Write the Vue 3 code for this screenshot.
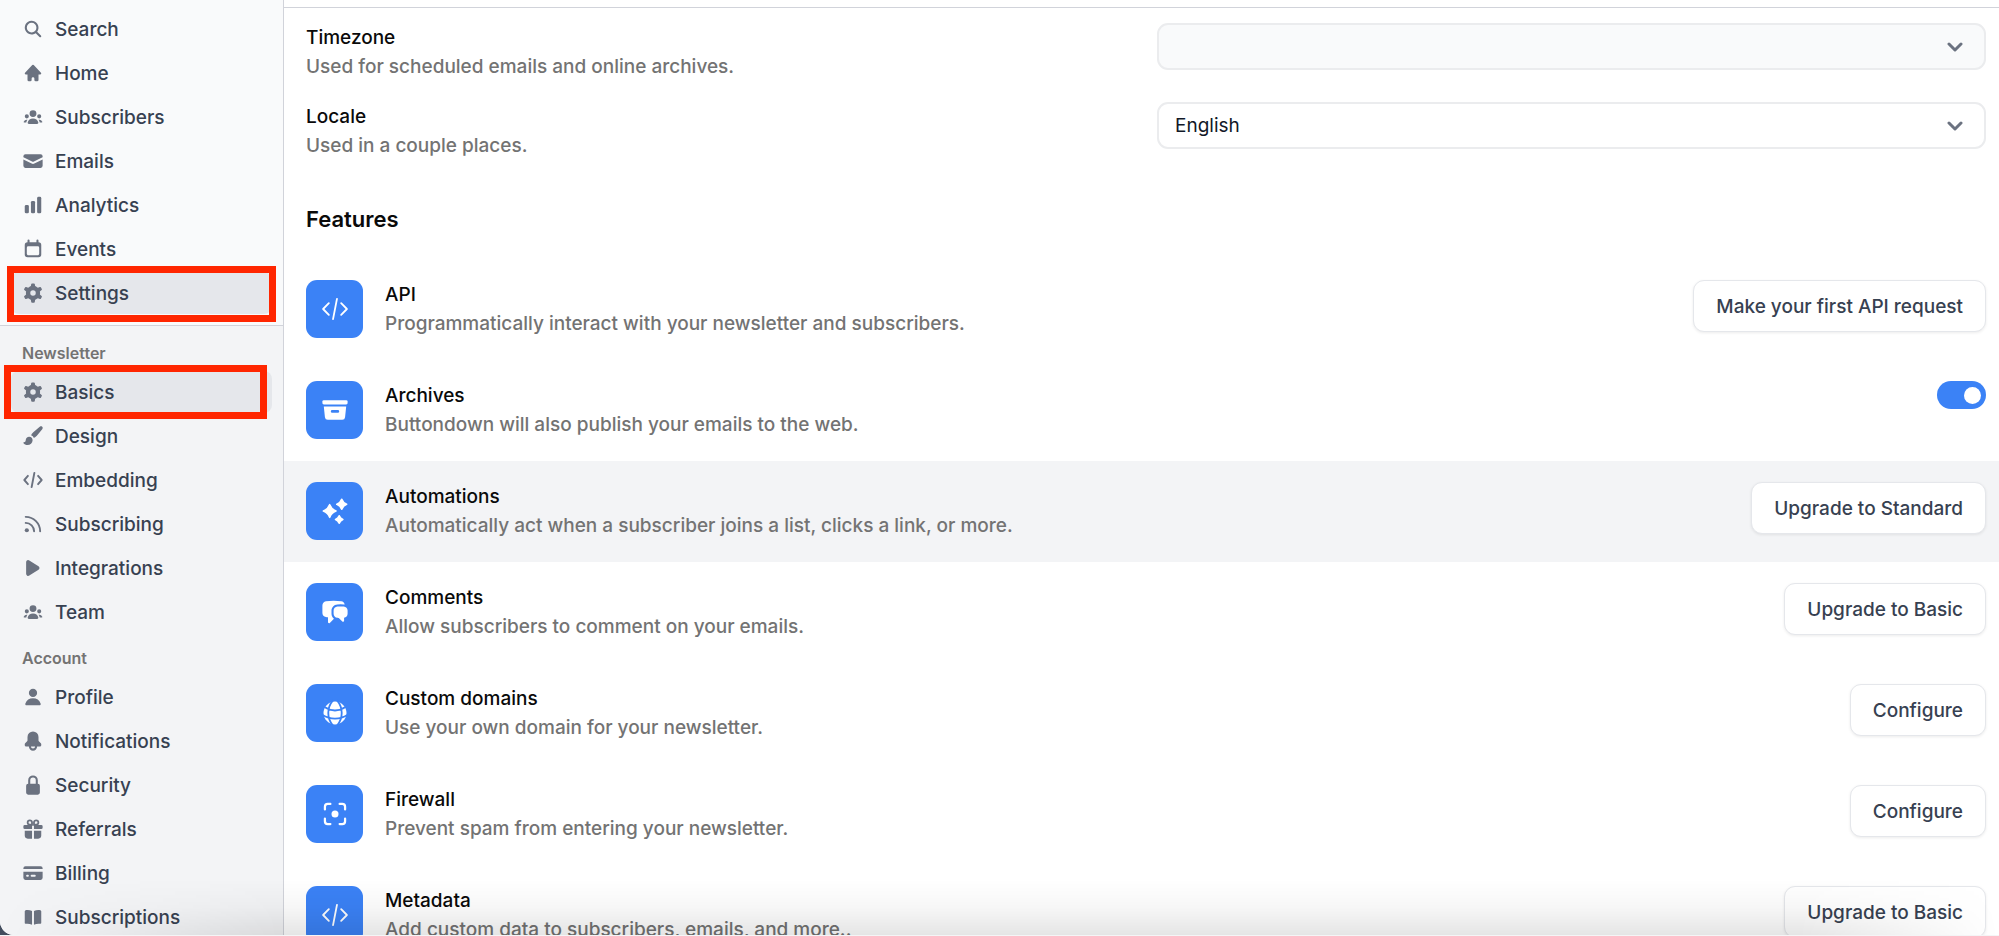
<script setup>
import { ref } from 'vue'

const gear =
  '<circle cx="8" cy="8" r="3.6" fill="none" stroke="currentColor" stroke-width="3.2"/><path id="t" d="M6.200 4.500 6.700 1.500Q6.800 1 7.300 1h1.400Q9.200 1 9.300 1.500L9.800 4.500zM6.200 11.500l.5 3Q6.800 15 7.300 15h1.400Q9.200 15 9.300 14.500L9.800 11.500z"/><path d="M6.200 4.500 6.700 1.500Q6.800 1 7.300 1h1.400Q9.200 1 9.300 1.500L9.800 4.500zM6.200 11.500l.5 3Q6.800 15 7.300 15h1.400Q9.200 15 9.300 14.500L9.800 11.500z" transform="rotate(60 8 8)"/><path d="M6.200 4.500 6.700 1.500Q6.800 1 7.300 1h1.400Q9.200 1 9.300 1.500L9.800 4.500zM6.200 11.500l.5 3Q6.800 15 7.300 15h1.400Q9.200 15 9.300 14.500L9.800 11.500z" transform="rotate(120 8 8)"/>'.replace(' id="t"', '')
const group =
  '<path d="M8 8a2.500 2.500 0 1 0 0-5 2.500 2.500 0 0 0 0 5ZM3.156 11.763c.16-.629.44-1.210.813-1.720a2.500 2.500 0 0 0-2.725 1.377c-.136.287.102.580.418.580h1.449c.010-.077.025-.156.045-.237ZM12.847 11.763c.020.080.036.160.046.237h1.446c.316 0 .554-.293.417-.579a2.500 2.500 0 0 0-2.722-1.378c.374.510.653 1.090.813 1.720ZM14 7.500a1.500 1.500 0 1 1-3 0 1.500 1.500 0 0 1 3 0ZM3.500 9a1.500 1.500 0 1 0 0-3 1.500 1.500 0 0 0 0 3ZM5 13c-.552 0-1.013-.455-.876-.990a4.002 4.002 0 0 1 7.753 0c.136.535-.324.990-.877.990H5Z"/>'

const icons = {
  search:
    '<path fill-rule="evenodd" d="M9.965 11.026a5 5 0 1 1 1.060-1.060l2.755 2.754a.75.75 0 1 1-1.060 1.060l-2.755-2.754ZM10.500 7a3.500 3.500 0 1 1-7 0 3.500 3.500 0 0 1 7 0Z"/>',
  home:
    '<path d="M8.543 2.232a.75.75 0 0 0-1.085 0l-5.250 5.500A.75.75 0 0 0 2.750 9H4v4a1 1 0 0 0 1 1h1a1 1 0 0 0 1-1v-1a1 1 0 1 1 2 0v1a1 1 0 0 0 1 1h1a1 1 0 0 0 1-1V9h1.250a.75.75 0 0 0 .543-1.268l-5.250-5.500Z"/>',
  group,
  mail:
    '<path d="M2.500 3A1.500 1.500 0 0 0 1 4.500v.793c.026.009.051.020.076.032L7.674 8.510c.206.100.446.100.652 0l6.598-3.185A.755.755 0 0 1 15 5.293V4.500A1.500 1.500 0 0 0 13.500 3h-11Z"/><path d="M15 6.954 8.978 9.860a2.250 2.250 0 0 1-1.956 0L1 6.954V11.500A1.500 1.500 0 0 0 2.500 13h11a1.500 1.500 0 0 0 1.500-1.500V6.954Z"/>',
  chart:
    '<rect x="2" y="8" width="3" height="6" rx="1"/><rect x="6.500" y="5" width="3" height="9" rx="1"/><rect x="11" y="2" width="3" height="12" rx="1"/>',
  calendar:
    '<path fill-rule="evenodd" d="M4 1.750a.75.75 0 0 1 1.500 0V3h5V1.750a.75.75 0 0 1 1.500 0V3a2 2 0 0 1 2 2v7a2 2 0 0 1-2 2H4a2 2 0 0 1-2-2V5a2 2 0 0 1 2-2V1.750ZM4.500 6a1 1 0 0 0-1 1v4.500a1 1 0 0 0 1 1h7a1 1 0 0 0 1-1V7a1 1 0 0 0-1-1h-7Z"/>',
  gear,
  brush:
    '<path d="M14.700 1.300c-.5-.5-1.200-.4-1.800 0L8.200 5.200C7.400 5.900 6.900 6.700 6.600 7.500c1 .4 1.600 1 2 2 .8-.3 1.600-.8 2.200-1.600l3.900-4.800c.5-.6.5-1.300 0-1.800Z"/><path d="M5.200 8.600c1.600 0 2.600 1.200 2.500 2.600-.1 2-1.700 3.300-3.700 3.300-1.200 0-2.300-.5-2.900-1.300-.2-.3 0-.6.3-.6.9-.1 1.200-.6 1.300-1.500.1-1.500 1.100-2.500 2.500-2.500Z"/>',
  code:
    '<path d="M4.300 5 1.700 8l2.600 3M11.700 5l2.600 3-2.600 3M9 2.800 7 13.200" fill="none" stroke="currentColor" stroke-width="1.400" stroke-linecap="round" stroke-linejoin="round"/>',
  rss:
    '<path d="M2.700 2.800A10.500 10.500 0 0 1 13.200 13.300M2.700 7.200a6.100 6.100 0 0 1 6.100 6.100" fill="none" stroke="currentColor" stroke-width="1.400" stroke-linecap="round"/><circle cx="3.500" cy="12.500" r="1.500"/>',
  play:
    '<path d="M3 3.732a1.500 1.500 0 0 1 2.305-1.265l6.706 4.267a1.500 1.500 0 0 1 0 2.531l-6.706 4.268A1.500 1.500 0 0 1 3 12.267V3.732Z"/>',
  user:
    '<path d="M8 8a3 3 0 1 0 0-6 3 3 0 0 0 0 6ZM12.735 14c.618 0 1.093-.561.872-1.139a6.002 6.002 0 0 0-11.215 0c-.220.578.254 1.139.872 1.139h9.470Z"/>',
  bell:
    '<path fill-rule="evenodd" d="M12 5a4 4 0 0 0-8 0v2.379a1.500 1.500 0 0 1-.440 1.060L2.294 9.707a1 1 0 0 0-.293.707V11a1 1 0 0 0 1 1h2a3 3 0 1 0 6 0h2a1 1 0 0 0 1-1v-.586a1 1 0 0 0-.293-.707L12.440 8.440A1.500 1.500 0 0 1 12 7.380V5Zm-5.500 7a1.500 1.500 0 0 0 3 0h-3Z"/>',
  lock:
    '<path fill-rule="evenodd" d="M8 1a3.500 3.500 0 0 0-3.500 3.500V7A1.500 1.500 0 0 0 3 8.500v5A1.500 1.500 0 0 0 4.500 15h7a1.500 1.500 0 0 0 1.500-1.500v-5A1.500 1.500 0 0 0 11.500 7V4.500A3.500 3.500 0 0 0 8 1Zm2 6V4.500a2 2 0 1 0-4 0V7h4Z"/>',
  gift:
    '<path d="M7.300 5V3.300A1.600 1.600 0 1 0 5.700 4.900zM8.700 5V3.300a1.600 1.600 0 1 1 1.600 1.600z" fill="none" stroke="currentColor" stroke-width="1.300"/><path d="M2 5h5.300v3H2a1 1 0 0 1-1-1V6a1 1 0 0 1 1-1ZM8.700 5H14a1 1 0 0 1 1 1v1a1 1 0 0 1-1 1H8.700ZM2 9.200h5.300V15H4.200A2.200 2.200 0 0 1 2 12.800ZM8.700 9.200H14v3.600a2.200 2.200 0 0 1-2.200 2.200H8.700Z"/>',
  card:
    '<path d="M2.500 3A1.500 1.500 0 0 0 1 4.500V5h14v-.5A1.500 1.500 0 0 0 13.500 3Z"/><path fill-rule="evenodd" d="M1 7h14v4.500a1.500 1.500 0 0 1-1.500 1.500h-11A1.500 1.500 0 0 1 1 11.500ZM3.700 9.300a.7.7 0 0 0 0 1.400h.6a.7.7 0 0 0 0-1.400ZM7 9.300a.7.7 0 0 0 0 1.400h2.300a.7.7 0 0 0 0-1.400Z"/>',
  book:
    '<path d="M7.300 3.700C6 3 4.200 2.800 2.600 3.100c-.4.100-.6.400-.6.700v8.400c0 .5.400.8.900.7 1.500-.2 3 0 4.400.7ZM8.700 3.700c1.300-.7 3.100-.9 4.700-.6.400.1.600.4.600.7v8.400c0 .5-.4.8-.9.700-1.500-.2-3 0-4.400.7Z"/>'
}

const tiles = {
  code:
    '<path d="M5.600 5.800 1.500 10l4.100 4.200M14.400 5.800l4.100 4.200-4.100 4.200M11.400 2.800 8.600 17.200" fill="none" stroke="currentColor" stroke-width="1.300" stroke-linecap="round" stroke-linejoin="round"/>',
  archive:
    '<rect x="1" y="3" width="18" height="3" rx="1"/><path fill-rule="evenodd" d="M2 7.500h16l-.811 7.710a2 2 0 0 1-1.990 1.790H4.802a2 2 0 0 1-1.990-1.790L2 7.500ZM7 11a1 1 0 0 1 1-1h4a1 1 0 1 1 0 2H8a1 1 0 0 1-1-1Z"/>',
  sparkles:
    '<g stroke="currentColor" stroke-width="1.200" stroke-linejoin="round"><path d="M6.200 5.500Q7.400 8.800 10.700 10 7.400 11.200 6.200 14.500 5 11.200 1.700 10 5 8.800 6.200 5.500Z"/><path d="M14.800 1.700Q15.700 4.300 18.300 5.200 15.700 6.100 14.800 8.700 13.900 6.100 11.300 5.200 13.900 4.300 14.800 1.700Z"/><path d="M13 13.400Q13.800 15.200 15.600 16 13.800 16.800 13 18.600 12.200 16.800 10.400 16 12.200 15.200 13 13.400Z"/></g>',
  chat:
    '<path d="M3.505 2.365A41.369 41.369 0 0 1 9 2c1.863 0 3.697.124 5.495.365 1.247.167 2.180 1.108 2.435 2.268a4.450 4.450 0 0 0-.577-.069 43.141 43.141 0 0 0-4.706 0C9.229 4.696 7.500 6.727 7.500 8.998v2.240c0 1.413.670 2.735 1.760 3.562l-2.980 2.980A.75.75 0 0 1 5 17.250v-3.443c-.501-.048-1-.106-1.495-.172C2.033 13.438 1 12.162 1 10.720V5.280c0-1.441 1.033-2.717 2.505-2.914Z"/><path d="M14 6c-.762 0-1.520.020-2.271.062C10.157 6.148 9 7.472 9 8.998v2.240c0 1.519 1.147 2.839 2.710 2.935.214.013.428.024.642.034.200.009.385.090.518.224l2.350 2.350a.75.75 0 0 0 1.280-.531v-2.070c1.453-.195 2.500-1.463 2.500-2.915V8.998c0-1.526-1.157-2.850-2.729-2.936A41.645 41.645 0 0 0 14 6Z"/>',
  globe:
    '<circle cx="10" cy="10" r="8.200"/><g fill="none" stroke="#3b82f6" stroke-width="1.300"><path d="M8.500 1Q5.200 5 5.200 10t3.300 9M11.500 1q3.300 4 3.300 9t-3.300 9M2.500 5.800Q6 8.200 10 8.200t7.500-2.400M1.200 11.500Q5 14 10 14t8.800-2.500"/></g>',
  focus:
    '<path d="M2.800 6.700V4.800a2 2 0 0 1 2-2h1.900M13.300 2.800h1.900a2 2 0 0 1 2 2v1.900M17.200 13.300v1.900a2 2 0 0 1-2 2h-1.900M6.700 17.200H4.800a2 2 0 0 1-2-2v-1.900" fill="none" stroke="currentColor" stroke-width="1.600" stroke-linecap="round"/><circle cx="10" cy="10" r="2.500"/>'
}

const primary = [
  { label: 'Search', icon: 'search' },
  { label: 'Home', icon: 'home' },
  { label: 'Subscribers', icon: 'group' },
  { label: 'Emails', icon: 'mail' },
  { label: 'Analytics', icon: 'chart' },
  { label: 'Events', icon: 'calendar' },
  { label: 'Settings', icon: 'gear', active: true, mark: 'mark-settings' }
]
const sections = [
  {
    title: 'Newsletter',
    items: [
      { label: 'Basics', icon: 'gear', active: true, mark: 'mark-basics' },
      { label: 'Design', icon: 'brush' },
      { label: 'Embedding', icon: 'code' },
      { label: 'Subscribing', icon: 'rss' },
      { label: 'Integrations', icon: 'play' },
      { label: 'Team', icon: 'group' }
    ]
  },
  {
    title: 'Account',
    items: [
      { label: 'Profile', icon: 'user' },
      { label: 'Notifications', icon: 'bell' },
      { label: 'Security', icon: 'lock' },
      { label: 'Referrals', icon: 'gift' },
      { label: 'Billing', icon: 'card' },
      { label: 'Subscriptions', icon: 'book' }
    ]
  }
]
const features = [
  { name: 'API', text: 'Programmatically interact with your newsletter and subscribers.', icon: 'code', action: 'Make your first API request' },
  { name: 'Archives', text: 'Buttondown will also publish your emails to the web.', icon: 'archive', toggle: true },
  { name: 'Automations', text: 'Automatically act when a subscriber joins a list, clicks a link, or more.', icon: 'sparkles', action: 'Upgrade to Standard', current: true },
  { name: 'Comments', text: 'Allow subscribers to comment on your emails.', icon: 'chat', action: 'Upgrade to Basic' },
  { name: 'Custom domains', text: 'Use your own domain for your newsletter.', icon: 'globe', action: 'Configure' },
  { name: 'Firewall', text: 'Prevent spam from entering your newsletter.', icon: 'focus', action: 'Configure' },
  { name: 'Metadata', text: 'Add custom data to subscribers, emails, and more..', icon: 'code', action: 'Upgrade to Basic' }
]
const archives = ref(true)
const locale = ref('English')
</script>

<template>
  <div class="desktop">
    <div class="window">
      <aside class="sidebar">
        <nav class="primary" aria-label="Main">
          <ul class="items">
            <li v-for="item in primary" :key="item.label" class="item">
              <a href="#" class="link" :class="{ active: item.active }">
                <svg class="icon" viewBox="0 0 16 16" fill="currentColor" aria-hidden="true" v-html="icons[item.icon]"></svg>
                {{ item.label }}
              </a>
              <span v-if="item.mark" class="mark" :class="item.mark"></span>
            </li>
          </ul>
        </nav>
        <nav class="secondary" aria-label="Settings">
          <section v-for="section in sections" :key="section.title">
            <h3 class="section-title">{{ section.title }}</h3>
            <ul class="items">
              <li v-for="item in section.items" :key="item.label" class="item">
                <a href="#" class="link" :class="{ active: item.active }">
                  <svg class="icon" viewBox="0 0 16 16" fill="currentColor" aria-hidden="true" v-html="icons[item.icon]"></svg>
                  {{ item.label }}
                </a>
                <span v-if="item.mark" class="mark" :class="item.mark"></span>
              </li>
            </ul>
          </section>
        </nav>
      </aside>

      <main class="main">
        <div class="topline"></div>
        <div class="fields">
          <div class="field">
            <div class="copy">
              <label class="name" for="timezone">Timezone</label>
              <p class="text">Used for scheduled emails and online archives.</p>
            </div>
            <div class="select-wrap">
              <select id="timezone" class="select" disabled></select>
              <svg class="chevron" viewBox="0 0 16 16" aria-hidden="true"><path d="M2 5l6 6 6-6" /></svg>
            </div>
          </div>
          <div class="field">
            <div class="copy">
              <label class="name" for="locale">Locale</label>
              <p class="text">Used in a couple places.</p>
            </div>
            <div class="select-wrap">
              <select id="locale" v-model="locale" class="select">
                <option>English</option>
              </select>
              <svg class="chevron" viewBox="0 0 16 16" aria-hidden="true"><path d="M2 5l6 6 6-6" /></svg>
            </div>
          </div>
        </div>

        <h2 class="heading">Features</h2>
        <ul class="features">
          <li v-for="f in features" :key="f.name" class="feature" :class="{ current: f.current }">
            <span class="tile">
              <svg class="tile-icon" viewBox="0 0 20 20" fill="currentColor" aria-hidden="true" v-html="tiles[f.icon]"></svg>
            </span>
            <div class="copy">
              <h3 class="name">{{ f.name }}</h3>
              <p class="text">{{ f.text }}</p>
            </div>
            <input v-if="f.toggle" v-model="archives" type="checkbox" class="toggle" :aria-label="f.name" />
            <button v-else type="button" class="button">{{ f.action }}</button>
          </li>
        </ul>
      </main>
      <div class="fade"></div>
    </div>
  </div>
</template>

<style>
body {
  background: #ffffff;
}
</style>

<style scoped>
.desktop {
  box-sizing: border-box;
  height: 100vh;
  border-bottom: 1px solid #f4f5f6;
  background: #434d5e;
  font-family: Inter, "Liberation Sans", sans-serif;
  font-size: 19px;
  font-weight: 500;
  line-height: 29px;
}
.window {
  position: relative;
  display: flex;
  height: 100%;
  overflow: hidden;
  border-bottom-left-radius: 14px;
  background: #ffffff;
}
.sidebar {
  box-sizing: border-box;
  display: flex;
  flex: none;
  flex-direction: column;
  width: 284px;
  border-right: 1px solid #d1d3da;
  background: #f3f4f6;
}
.primary {
  padding: 8px 11px 11px;
  border-bottom: 1px solid #d1d3da;
  background: #f9fafb;
}
.secondary {
  display: flex;
  flex: 1;
  flex-direction: column;
  gap: 11px;
  padding: 13px 11px 0;
}
.items {
  display: flex;
  flex-direction: column;
  gap: 2px;
  margin: 0;
  padding: 0;
  list-style: none;
}
.item {
  position: relative;
}
.link {
  display: flex;
  align-items: center;
  gap: 11px;
  height: 42px;
  padding: 0 11px;
  border-radius: 8px;
  color: #374151;
  text-decoration: none;
}
.link.active {
  background: #e5e7eb;
}
.icon {
  flex: none;
  width: 22px;
  height: 22px;
  color: #6b7280;
}
.section-title {
  margin: 0;
  padding: 0 11px 3px;
  color: #737373;
  font-size: 16px;
  font-weight: 600;
  line-height: 29px;
}
.mark {
  position: absolute;
  border: 7px solid #ff2600;
  pointer-events: none;
}
.mark-settings {
  inset: -6px -4px -8px;
}
.mark-basics {
  inset: -6px 5px -6px -7px;
}
.main {
  flex: 1;
  min-width: 0;
  color: #0a0a0a;
}
.topline {
  height: 7px;
  border-bottom: 1px solid #d1d3da;
}
.fields {
  display: grid;
  gap: 21px;
  padding: 15px 13px 0 22px;
}
.field {
  display: grid;
  grid-template-columns: 851fr 829fr;
  align-items: start;
}
.name {
  display: block;
  margin: 0;
  color: #0a0a0a;
  font-size: 19px;
  font-weight: 500;
  line-height: 29px;
}
.text {
  margin: 0;
  color: #737373;
}
.select-wrap {
  position: relative;
}
.select {
  display: block;
  box-sizing: border-box;
  width: 100%;
  height: 47px;
  padding: 0 52px 0 16px;
  border: 2px solid #ebecee;
  border-radius: 11px;
  appearance: none;
  background: #ffffff;
  color: #111827;
  font: inherit;
  font-weight: 400;
}
.select:disabled {
  background: #f9fafb;
  opacity: 1;
}
.chevron {
  position: absolute;
  top: 16px;
  right: 23px;
  width: 16px;
  height: 16px;
  fill: none;
  stroke: #6b7280;
  stroke-width: 3;
  stroke-linecap: round;
  stroke-linejoin: round;
  pointer-events: none;
}
.heading {
  margin: 0;
  padding: 45px 22px 25px;
  font-size: 22px;
  font-weight: 600;
  line-height: 29px;
}
.features {
  margin: 0;
  padding: 0;
  list-style: none;
}
.feature {
  box-sizing: border-box;
  display: flex;
  align-items: flex-start;
  gap: 22px;
  min-height: 101px;
  padding: 21px 13px 22px 22px;
}
.feature.current {
  background: #f3f4f6;
}
.feature .copy {
  flex: 1;
}
.tile {
  display: grid;
  flex: none;
  place-items: center;
  width: 57px;
  height: 58px;
  border-radius: 11px;
  background: #3b82f6;
  color: #ffffff;
}
.tile-icon {
  width: 28px;
  height: 28px;
}
.button {
  box-sizing: border-box;
  height: 52px;
  padding: 0 22px;
  border: 1px solid #e5e7eb;
  border-radius: 11px;
  background: #ffffff;
  box-shadow: 0 1px 3px rgba(0, 0, 0, 0.08);
  color: #374151;
  font: inherit;
}
.toggle {
  position: relative;
  width: 49px;
  height: 28px;
  margin: 0;
  border-radius: 14px;
  appearance: none;
  background: #d1d5db;
}
.toggle::before {
  position: absolute;
  top: 6px;
  left: 6px;
  width: 17px;
  height: 17px;
  border-radius: 50%;
  background: #ffffff;
  content: "";
}
.toggle:checked {
  background: #3b82f6;
}
.toggle:checked::before {
  right: 5px;
  left: auto;
}
.fade {
  position: absolute;
  right: 0;
  bottom: 0;
  left: 0;
  height: 56px;
  background: linear-gradient(to bottom, rgba(0, 0, 0, 0), rgba(0, 0, 0, 0.03) 50%, rgba(0, 0, 0, 0.1));
  mask-image: linear-gradient(to right, transparent, #000000 14%, #000000 90%, transparent);
  pointer-events: none;
}
</style>
